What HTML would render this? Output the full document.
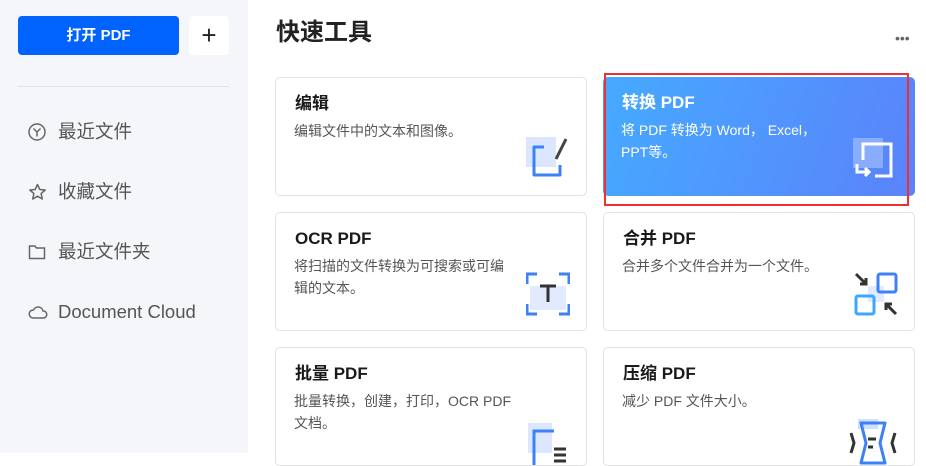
<!DOCTYPE html>
<html><head><meta charset="utf-8"><style>
*{margin:0;padding:0;box-sizing:border-box}
body{width:926px;height:453px;overflow:hidden;background:#fff;font-family:"Liberation Sans","Noto Sans CJK SC",sans-serif;position:relative}
.side{position:absolute;left:0;top:0;width:248px;height:453px;background:#f5f6fa}
.btn{position:absolute;left:18px;top:16px;width:161px;height:39px;background:#0062ff;border-radius:4px;color:#fff;font-weight:bold;font-size:15px;text-align:center;line-height:39px}
.plus{position:absolute;left:189px;top:16px;width:40px;height:39px;background:#fff;border-radius:4px;text-align:center;line-height:38px;font-size:26px;color:#222}
.div{position:absolute;left:18px;top:86px;width:211px;height:1px;background:#e0e2e6}
.nav{position:absolute;left:28px;font-size:18.5px;color:#555;height:24px;line-height:24px}
.nav svg{position:absolute;left:0;top:3px}
.nav span{position:absolute;left:30px;white-space:nowrap}
h1{position:absolute;left:276px;top:16px;font-size:24px;line-height:34px;font-weight:bold;color:#222}
.dots{position:absolute;left:895px;top:30px;font-size:14px;color:#666;letter-spacing:0px}
.card{position:absolute;width:312px;height:119px;border:1px solid #e2e2e2;border-radius:5px;background:#fff}
.card b{position:absolute;left:19px;top:15px;font-size:17px;line-height:22px;color:#1a1a1a;white-space:nowrap}
.card p{position:absolute;left:18px;top:42px;width:226px;font-size:14px;color:#555;line-height:22px}
.card svg{position:absolute;right:16px;bottom:14px}
.conv{background:linear-gradient(110deg,#45aaff,#5b82fb);border:none}
.conv b,.conv p{color:#fff}
.red{position:absolute;left:604px;top:73px;width:305px;height:133px;border:2px solid #f03030}
</style></head><body>
<div class="side">
<div class="btn">打开 PDF</div><div class="plus">+</div><div class="div"></div>
<div class="nav" style="top:120px"><svg width="18" height="18"><circle cx="9" cy="9" r="8" fill="none" stroke="#666" stroke-width="1.5"/><path d="M5.5 5.5L9 9L12.5 5.5M9 9V13.5" fill="none" stroke="#666" stroke-width="1.5"/></svg><span>最近文件</span></div>
<div class="nav" style="top:180px"><svg width="19" height="18"><path d="M9.5 1.5L11.8 6.5L17.2 7L13.1 10.6L14.3 16L9.5 13.2L4.7 16L5.9 10.6L1.8 7L7.2 6.5Z" fill="none" stroke="#666" stroke-width="1.5" stroke-linejoin="round"/></svg><span>收藏文件</span></div>
<div class="nav" style="top:240px"><svg width="18" height="18"><path d="M1.5 3H7L8.5 5H16.5V15.5H1.5Z" fill="none" stroke="#666" stroke-width="1.5"/></svg><span>最近文件夹</span></div>
<div class="nav" style="top:300px"><svg width="20" height="18"><path d="M5 15H15.5A3.5 3.5 0 0 0 15 8A5 5 0 0 0 5.5 7A4 4 0 0 0 5 15Z" fill="none" stroke="#666" stroke-width="1.5"/></svg><span>Document Cloud</span></div>
</div>
<h1>快速工具</h1><div class="dots">•••</div>
<div class="card" style="left:275px;top:77px"><b>编辑</b><p>编辑文件中的文本和图像。</p><svg width="44" height="46"><rect x="0" y="2" width="30" height="30" fill="#dce6ff"/><path d="M18 12H8V40H34V30" fill="none" stroke="#3b82f6" stroke-width="3" stroke-linejoin="round"/><path d="M30 24L40 4" stroke="#444" stroke-width="3"/></svg></div>
<div class="card conv" style="left:603px;top:77px"><b>转换 PDF</b><p style="width:215px">将 PDF 转换为 Word， Excel，PPT等。</p><svg width="46" height="46"><rect x="0" y="2" width="30" height="30" fill="#ffffff" opacity=".3"/><path d="M10 24V8H38V40H22" fill="none" stroke="#fff" stroke-width="3"/><path d="M4 28V36H16M12 32L16 36L12 40" fill="none" stroke="#fff" stroke-width="3"/></svg></div>
<div class="red"></div>
<div class="card" style="left:275px;top:212px"><b>OCR PDF</b><p style="width:218px">将扫描的文件转换为可搜索或可编辑的文本。</p><svg width="44" height="44"><rect x="4" y="14" width="36" height="24" fill="#e2eaff"/><path d="M1 12V2H11M33 2H43V12M43 32V42H33M11 42H1V32" fill="none" stroke="#3b82f6" stroke-width="3"/><path d="M14 14H30M22 14V30" stroke="#333" stroke-width="3"/></svg></div>
<div class="card" style="left:603px;top:212px"><b>合并 PDF</b><p>合并多个文件合并为一个文件。</p><svg width="44" height="44"><rect x="14" y="14" width="16" height="16" fill="#e2eaff"/><rect x="24" y="2" width="18" height="18" rx="2" fill="none" stroke="#3b82f6" stroke-width="3"/><rect x="2" y="24" width="18" height="18" rx="2" fill="none" stroke="#3ba7ff" stroke-width="3"/><path d="M2 2L12 12M6 12H12V6M42 42L32 32M38 32H32V38" fill="none" stroke="#333" stroke-width="3"/></svg></div>
<div class="card" style="left:275px;top:347px"><b>批量 PDF</b><p style="width:218px">批量转换，创建，打印，OCR PDF 文档。</p><svg width="44" height="44" style="bottom:0"><rect x="2" y="2" width="24" height="30" fill="#dce6ff"/><path d="M28 10H8V44" fill="none" stroke="#3b82f6" stroke-width="3"/><path d="M28 28H40M28 34H40M28 40H40" stroke="#333" stroke-width="3"/></svg></div>
<div class="card" style="left:603px;top:347px"><b>压缩 PDF</b><p>减少 PDF 文件大小。</p><svg width="50" height="46" style="bottom:0"><path d="M10 0H30V10H10Z" fill="#cfe0ff"/><path d="M13 4H37L32 24L37 44H13L18 24Z" fill="none" stroke="#3b82f6" stroke-width="3" stroke-linejoin="round"/><path d="M3 14L6 24L3 34M47 14L44 24L47 34M20 20H28M20 28H25" fill="none" stroke="#333" stroke-width="3"/></svg></div>
</body></html>
